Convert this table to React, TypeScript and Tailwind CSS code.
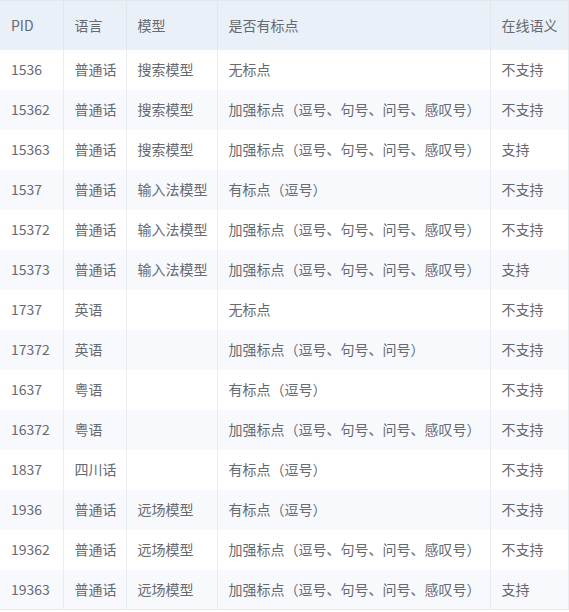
const rows: [string, string, string, string, string][] = [
  ["1536", "普通话", "搜索模型", "无标点", "不支持"],
  ["15362", "普通话", "搜索模型", "加强标点（逗号、句号、问号、感叹号）", "不支持"],
  ["15363", "普通话", "搜索模型", "加强标点（逗号、句号、问号、感叹号）", "支持"],
  ["1537", "普通话", "输入法模型", "有标点（逗号）", "不支持"],
  ["15372", "普通话", "输入法模型", "加强标点（逗号、句号、问号、感叹号）", "不支持"],
  ["15373", "普通话", "输入法模型", "加强标点（逗号、句号、问号、感叹号）", "支持"],
  ["1737", "英语", "", "无标点", "不支持"],
  ["17372", "英语", "", "加强标点（逗号、句号、问号）", "不支持"],
  ["1637", "粤语", "", "有标点（逗号）", "不支持"],
  ["16372", "粤语", "", "加强标点（逗号、句号、问号、感叹号）", "不支持"],
  ["1837", "四川话", "", "有标点（逗号）", "不支持"],
  ["1936", "普通话", "远场模型", "有标点（逗号）", "不支持"],
  ["19362", "普通话", "远场模型", "加强标点（逗号、句号、问号、感叹号）", "不支持"],
  ["19363", "普通话", "远场模型", "加强标点（逗号、句号、问号、感叹号）", "支持"],
];

const headers = ["PID", "语言", "模型", "是否有标点", "在线语义"];
const widths = ["w-[63px]", "w-[63px]", "w-[91px]", "w-[273px]", "w-[78px]"];

export default function App() {
  return (
    <div
      className="bg-white w-[569px] h-[612px]"
      style={{ fontFamily: '"Microsoft YaHei", "Noto Sans CJK SC", "Noto Sans", sans-serif' }}
    >
      <table className="w-[568px] table-fixed border-collapse text-[14px] text-[#666a70]">
        <colgroup>
          {widths.map((w, i) => (
            <col key={i} className={w} />
          ))}
        </colgroup>
        <thead>
          <tr className="h-[49px] bg-[#eaf0f8] border-t border-[#e4e8ee]">
            {headers.map((h) => (
              <th key={h} className="text-left font-normal pl-[11px] whitespace-nowrap border-r border-[#e3e7ed]">
                {h}
              </th>
            ))}
          </tr>
        </thead>
        <tbody>
          {rows.map((r, ri) => (
            <tr
              key={r[0]}
              className={
                "h-[40px] " +
                (ri % 2 === 1 ? "bg-[#f7f9fd]" : "bg-white") +
                (ri === rows.length - 1 ? " border-b border-[#e4e8ee]" : "")
              }
            >
              {r.map((c, ci) => (
                <td key={ci} className="pl-[11px] whitespace-nowrap border-r border-[#e8ebf0]">
                  {c}
                </td>
              ))}
            </tr>
          ))}
        </tbody>
      </table>
    </div>
  );
}
